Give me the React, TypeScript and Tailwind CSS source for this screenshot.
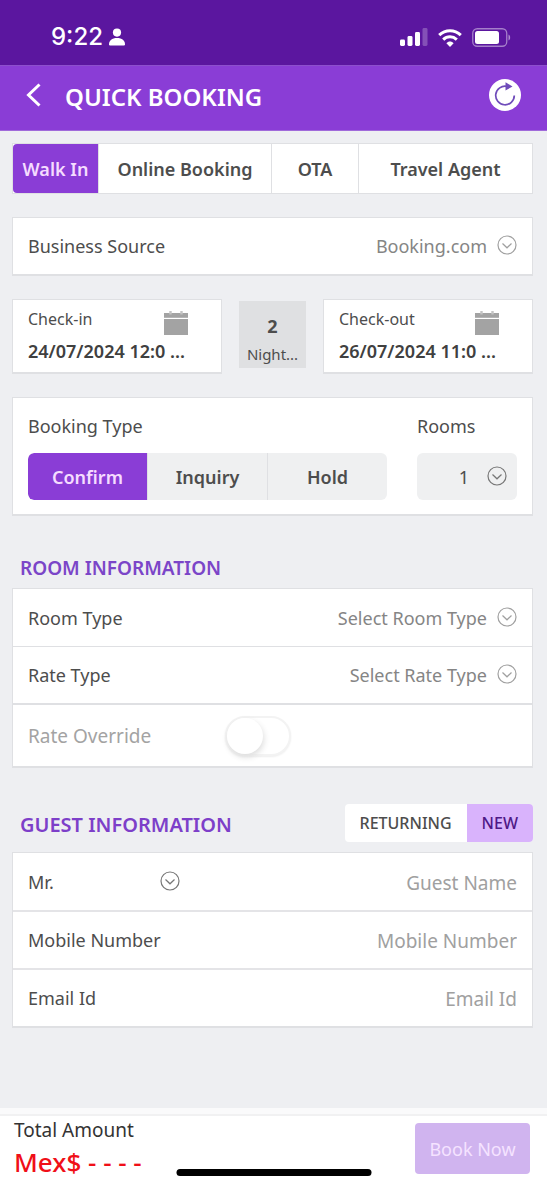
import { useState } from 'react';
import clsx from 'clsx';

const CARD = 'border border-b-2 border-[#dfe0e3] bg-white';

function StatusBar() {
  return (
    <div className="flex h-[65px] items-end justify-between bg-[#5b169f] pr-9 pb-4 pl-[51px] text-white">
      <div className="flex items-center gap-1.5 font-[Inter,sans-serif] text-2xl leading-6 font-medium">
        9:22
        <svg className="h-[18px] w-4" viewBox="0 0 16 18" fill="currentColor" aria-hidden="true">
          <circle cx="8" cy="4.6" r="4.1" />
          <path d="M0 16.6C0 12.4 3 10 8 10s8 2.4 8 6.6c0 .7-.3.9-1 .9H1c-.7 0-1-.2-1-.9Z" />
        </svg>
      </div>
      <div className="flex items-center gap-2.5 pb-0.5" aria-hidden="true">
        <svg className="h-[19px] w-7" viewBox="0 0 28 19" fill="currentColor">
          <rect x="0" y="11.5" width="5" height="6.5" rx="1.4" />
          <rect x="7.5" y="8" width="5" height="10" rx="1.4" />
          <rect x="15" y="4" width="5" height="14" rx="1.4" />
          <rect x="22.5" y="0" width="5" height="18" rx="1.4" opacity="0.25" />
        </svg>
        <svg className="h-[18px] w-6" viewBox="0 0 24 18" fill="none" stroke="currentColor" strokeWidth="3">
          <path d="M1.2 6.2C7.4.2 16.6.2 22.8 6.2" />
          <path d="M5.2 10.6c4-3.8 9.6-3.8 13.6 0" />
          <path d="M8.4 14.2C10.4 12 13.6 12 15.6 14.2L12 18Z" fill="currentColor" stroke="none" />
        </svg>
        <svg className="h-[19px] w-[39px]" viewBox="0 0 39 19" fill="none">
          <rect x="0.75" y="0.75" width="34" height="17.5" rx="4.5" stroke="currentColor" strokeWidth="1.3" opacity="0.45" />
          <rect x="3" y="3" width="24" height="13" rx="2.5" fill="currentColor" />
          <path d="M36.5 6.5c2.2 1 2.2 5 0 6Z" fill="currentColor" opacity="0.5" />
        </svg>
      </div>
    </div>
  );
}

function Header() {
  return (
    <header className="flex h-[66px] items-center border-t border-b border-t-[#8d4fce] border-b-[#a06ada] bg-[#8a3dd6] px-[26px] pb-1.5 text-white">
      <button type="button" aria-label="Back">
        <svg className="h-6 w-4" viewBox="0 0 16 24" fill="none" stroke="currentColor" strokeWidth="3">
          <path d="M13.5 1.5 2.5 12l11 10.5" />
        </svg>
      </button>
      <h1 className="flex-1 pt-1 pl-[23px] text-2xl leading-8 font-semibold">QUICK BOOKING</h1>
      <button type="button" aria-label="Refresh">
        <svg className="size-8" viewBox="0 0 32 32" fill="none">
          <circle cx="16" cy="16" r="16" fill="#fff" />
          <path d="M25.3 16.5A9.3 9.3 0 1 1 18 7.4" stroke="#6f4cba" strokeWidth="1.7" />
          <path d="M16.5 3.2 23.5 7.4l-7 4.2Z" fill="#6f4cba" />
        </svg>
      </button>
    </header>
  );
}

function CircleChevron({ className = 'right-0 text-[#a0a0a0]' }: { className?: string }) {
  return (
    <svg
      className={clsx('pointer-events-none absolute top-1/2 size-5 -translate-y-[11px]', className)}
      viewBox="0 0 20 20"
      fill="none"
      stroke="currentColor"
      strokeWidth="1.2"
      aria-hidden="true"
    >
      <circle cx="10" cy="10" r="9" />
      <path d="m5.5 8.5 4.5 4.3 4.5-4.3" />
    </svg>
  );
}

function CalendarIcon() {
  return (
    <svg className="size-6" viewBox="0 0 24 24" fill="#a3a3a3" aria-hidden="true">
      <path d="M0 2h24v4.8H0Z" />
      <path d="M5.3 0h2.400v3.600H5.300ZM16.300 0h2.400v3.600h-2.400Z" fill="#c4c4c4" />
      <path d="M0 8h24v16H0Z" />
    </svg>
  );
}

type SelectRowProps = { id: string; label: string; value: string; className?: string };

function SelectRow({ id, label, value, className }: SelectRowProps) {
  return (
    <div className={clsx('flex items-center px-[15px]', className)}>
      <label htmlFor={id}>{label}</label>
      <div className="relative flex-1">
        <select id={id} className="w-full appearance-none bg-transparent pr-[30px] text-right text-[#858585] outline-none">
          <option>{value}</option>
        </select>
        <CircleChevron />
      </div>
    </div>
  );
}

function DateField({ id, label, value }: { id: string; label: string; value: string }) {
  return (
    <div className={clsx(CARD, 'flex h-[75px] min-w-0 flex-1 flex-col px-[15px] pt-[7px]')}>
      <div className="flex justify-between pr-[18px]">
        <label htmlFor={id} className="text-base leading-6">{label}</label>
        <div className="pt-1">
          <CalendarIcon />
        </div>
      </div>
      <input
        id={id}
        readOnly
        value={value}
        className="w-full bg-transparent text-lg leading-8 font-semibold text-[#404040] outline-none"
      />
    </div>
  );
}

function InputRow({ id, label, type = 'text' }: { id: string; label: string; type?: string }) {
  return (
    <div className="flex h-[58px] items-center border-t-2 border-[#e4e4e7] px-[15px]">
      <label htmlFor={id}>{label}</label>
      <input
        id={id}
        type={type}
        placeholder={label}
        className="min-w-0 flex-1 bg-transparent pt-0.5 text-right text-[19px] outline-none placeholder:text-[#a0a0a0]"
      />
    </div>
  );
}

const sources = [
  { name: 'Walk In', width: 'w-[86px]' },
  { name: 'Online Booking', width: 'w-[173px]' },
  { name: 'OTA', width: 'w-[87px]' },
  { name: 'Travel Agent', width: 'flex-1' },
];

const bookingTypes = ['Confirm', 'Inquiry', 'Hold'];

export default function App() {
  const [source, setSource] = useState('Walk In');
  const [bookingType, setBookingType] = useState('Confirm');
  const [guestType, setGuestType] = useState('NEW');

  return (
    <div className="flex min-h-screen flex-col bg-[#eeeff2] font-['Noto_Sans',sans-serif] text-lg leading-6 text-[#4d4d4d]">
      <StatusBar />
      <Header />

      <main className="flex-1 pt-3 pr-3.5 pb-16 pl-3">
        <div className="flex h-[51px] border border-[#dfe0e3] bg-white">
          {sources.map(({ name, width }) => (
            <button
              key={name}
              type="button"
              onClick={() => setSource(name)}
              className={clsx(
                width,
                'border-r border-[#dfe0e3] font-semibold last:border-r-0',
                source === name && 'rounded-l bg-[#8a3dd6] text-[#f5dcff]'
              )}
            >
              {name}
            </button>
          ))}
        </div>

        <SelectRow id="source" label="Business Source" value="Booking.com" className={clsx(CARD, 'mt-[23px] h-[59px]')} />

        <div className="mt-[23px] flex gap-[17px]">
          <DateField id="check-in" label="Check-in" value="24/07/2024 12:0 ..." />
          <div className="mt-0.5 flex h-[67px] w-[67px] flex-col items-center gap-1 bg-[#dfe0e2] pt-[11px] text-[15px] leading-6">
            <span className="text-lg font-bold">2</span>
            <span className="leading-5">Night...</span>
          </div>
          <DateField id="check-out" label="Check-out" value="26/07/2024 11:0 ..." />
        </div>

        <div className={clsx(CARD, 'mt-[23px] flex h-[119px] gap-[30px] px-[15px] pt-4')}>
          <div className="flex-1">
            <div>Booking Type</div>
            <div className="mt-[15px] flex h-[47px] overflow-hidden rounded-md bg-[#eff0f1]">
              {bookingTypes.map((name) => (
                <button
                  key={name}
                  type="button"
                  onClick={() => setBookingType(name)}
                  className={clsx(
                    'flex-1 border-r border-[#dfe0e3] font-semibold last:border-r-0',
                    bookingType === name && 'rounded-l-md bg-[#8a3dd6] text-[#f5dcff]'
                  )}
                >
                  {name}
                </button>
              ))}
            </div>
          </div>
          <div className="w-[100px]">
            <label htmlFor="rooms">Rooms</label>
            <div className="relative mt-[15px]">
              <select
                id="rooms"
                className="h-[47px] w-full appearance-none rounded-md bg-[#eff0f1] pr-12 text-right outline-none"
              >
                <option>1</option>
              </select>
              <CircleChevron className="right-2.5 text-[#777]" />
            </div>
          </div>
        </div>

        <h2 className="mt-10 pl-2 text-[19px] leading-6 font-semibold text-[#7b45c8]">ROOM INFORMATION</h2>
        <div className={clsx(CARD, 'mt-2')}>
          <SelectRow id="room-type" label="Room Type" value="Select Room Type" className="h-[57px]" />
          <SelectRow
            id="rate-type"
            label="Rate Type"
            value="Select Rate Type"
            className="h-[59px] border-t border-b-2 border-[#dfe0e3]"
          />
          <div className="flex h-[61px] items-center px-[15px] text-[#a3a3a3]">
            <label htmlFor="override" className="w-[197px] text-[19px]">Rate Override</label>
            <input
              id="override"
              type="checkbox"
              role="switch"
              className="h-10 w-[66px] appearance-none rounded-full border-2 border-[#f3f3f3] bg-white shadow-[0_1px_2px_#eee] before:block before:size-9 before:rounded-full before:bg-white before:shadow-[1px_3px_6px_#ddd] before:content-[''] checked:bg-[#8a3dd6] checked:before:translate-x-[26px]"
            />
          </div>
        </div>

        <div className="mt-9 flex items-center justify-between">
          <h2 className="pt-1 pl-2 text-xl leading-6 font-semibold text-[#7d3fc9]">GUEST INFORMATION</h2>
          <div className="flex h-[38px] overflow-hidden rounded-sm bg-white text-base font-medium">
            {['RETURNING', 'NEW'].map((name) => (
              <button
                key={name}
                type="button"
                onClick={() => setGuestType(name)}
                className={clsx('px-[15px]', guestType === name && 'bg-[#d9b3fc] text-[#4e1886]')}
              >
                {name}
              </button>
            ))}
          </div>
        </div>

        <div className={clsx(CARD, 'mt-2.5')}>
          <div className="flex h-[57px] items-center justify-between px-[15px]">
            <div className="relative w-[152px]">
              <select aria-label="Title" className="w-full appearance-none bg-transparent outline-none">
                <option>Mr.</option>
              </select>
              <CircleChevron className="right-0 text-[#777]" />
            </div>
            <input
              aria-label="Guest Name"
              placeholder="Guest Name"
              className="min-w-0 flex-1 bg-transparent pt-0.5 text-right text-[19px] outline-none placeholder:text-[#a0a0a0]"
            />
          </div>
          <InputRow id="mobile" label="Mobile Number" type="tel" />
          <InputRow id="email" label="Email Id" type="email" />
        </div>
      </main>

      <footer className="relative border-t-[6px] border-[#fafafb] bg-white">
        <div className="flex h-[73px] items-start justify-between border-t-2 border-[#f1f1f2] pr-[17px] pl-3.5">
          <div className="pt-0.5">
            <div className="text-[19px] text-[#333]">Total Amount</div>
            <div className="pt-1 text-[26px] leading-8 font-medium text-[#f00f18]">Mex$ - - - -</div>
          </div>
          <button type="button" className="mt-[7px] h-[51px] w-[115px] rounded bg-[#d0b4ef] text-[#f5e3ff]">
            Book Now
          </button>
        </div>
        <div className="absolute bottom-[11px] left-1/2 h-[7px] w-[195px] -translate-x-1/2 rounded-full bg-black" />
      </footer>
    </div>
  );
}
